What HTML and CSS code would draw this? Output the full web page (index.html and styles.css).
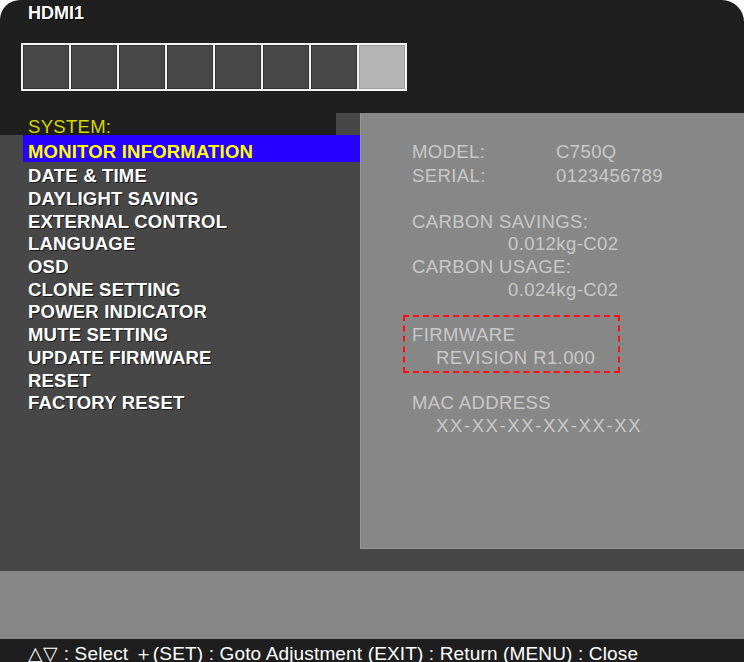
FILE: index.html
```html
<!DOCTYPE html>
<html>
<head>
<meta charset="utf-8">
<link rel="stylesheet" href="styles.css">
</head>
<body>
<div class="osd">
  <div class="title">HDMI1</div>
  <div class="cells">
    <div class="cell sel"></div>
    <div class="cell sel"></div>
    <div class="cell"></div>
    <div class="cell"></div>
    <div class="cell"></div>
    <div class="cell"></div>
    <div class="cell"></div>
    <div class="cell light"></div>
  </div>
  <div class="main">
    <div class="menu">
      <div class="menu-head">SYSTEM:</div>
      <div class="menu-list">
        <div class="item active">MONITOR INFORMATION</div>
        <div class="item">DATE &amp; TIME</div>
        <div class="item">DAYLIGHT SAVING</div>
        <div class="item">EXTERNAL CONTROL</div>
        <div class="item">LANGUAGE</div>
        <div class="item">OSD</div>
        <div class="item">CLONE SETTING</div>
        <div class="item">POWER INDICATOR</div>
        <div class="item">MUTE SETTING</div>
        <div class="item">UPDATE FIRMWARE</div>
        <div class="item">RESET</div>
        <div class="item">FACTORY RESET</div>
      </div>
    </div>
    <div class="info-col">
      <div class="info">
        <div class="pair first"><span>MODEL:</span><span>C750Q</span></div>
        <div class="pair"><span>SERIAL:</span><span>0123456789</span></div>
        <div class="blank"></div>
        <div class="line">CARBON SAVINGS:</div>
        <div class="line val">0.012kg-C02</div>
        <div class="line">CARBON USAGE:</div>
        <div class="line val">0.024kg-C02</div>
        <div class="blank"></div>
        <div class="fw-box">
          <div class="line">FIRMWARE</div>
          <div class="line sub">REVISION R1.000</div>
        </div>
        <div class="blank"></div>
        <div class="line">MAC ADDRESS</div>
        <div class="line sub wide">XX-XX-XX-XX-XX-XX</div>
      </div>
    </div>
  </div>
  <div class="band"></div>
  <div class="footer">△▽ : Select ＋(SET) : Goto Adjustment (EXIT) : Return (MENU) : Close</div>
</div>
</body>
</html>
```
FILE: styles.css
```css
html, body {
  margin: 0;
  padding: 0;
  background: #ffffff;
}
.osd {
  width: 744px;
  height: 662px;
  background: #1f1f1f;
  border-radius: 20px 22px 0 0;
  overflow: hidden;
  display: flex;
  flex-direction: column;
  font-family: "Liberation Sans", Arial, sans-serif;
  font-size: 18.5px;
}
.title {
  height: 27px;
  line-height: 27px;
  padding-left: 28px;
  color: #ffffff;
  font-weight: bold;
  font-size: 18px;
  text-shadow: 1px 1px 0 #000;
}
.cells {
  display: flex;
  margin: 16px 0 0 21px;
  height: 48px;
}
.cell {
  box-sizing: border-box;
  width: 50px;
  height: 48px;
  border: 2px solid #f4f4f4;
  background: #484848;
  box-shadow: inset 0 0 0 1px #333333;
}
.cell + .cell {
  margin-left: -2px;
}
.cell.light {
  background: #b4b4b4;
  box-shadow: inset 0 0 0 1px #a0a0a0;
}
.main {
  display: flex;
  margin-top: 22px;
  height: 458px;
}
.menu {
  width: 360px;
  display: flex;
  flex-direction: column;
}
.menu-head {
  height: 22px;
  line-height: 28px;
  padding-left: 28px;
  color: #d6d600;
  letter-spacing: 0.3px;
  background: linear-gradient(to right, transparent 336px, #474747 336px);
}
.menu-list {
  flex: 1;
  background: #474747;
}
.item {
  padding-left: 28px;
  line-height: 22.7px;
  color: #ffffff;
  font-weight: bold;
  letter-spacing: 0.2px;
  text-shadow: 1px 1px 0 #1a1a1a;
  white-space: nowrap;
}
.item.active {
  box-sizing: border-box;
  height: 27px;
  margin: 0 0 3.2px 23px;
  padding: 5.6px 0 0 5px;
  background: #2800ff;
  color: #ffff00;
  text-shadow: none;
}
.info-col {
  flex: 1;
  background: #474747;
  padding-bottom: 22px;
  display: flex;
}
.info {
  flex: 1;
  background: #878787;
  border-left: 1px solid #959595;
  border-bottom: 1px solid #959595;
  padding: 28.4px 0 0 51px;
  color: #c8c8c8;
  line-height: 22.7px;
  letter-spacing: 0.4px;
}
.pair {
  display: grid;
  grid-template-columns: 144px auto;
}
.pair.first {
  margin-bottom: 1.3px;
}
.blank {
  height: 22.7px;
}
.val {
  padding-left: 96px;
}
.sub {
  padding-left: 24px;
}
.wide {
  letter-spacing: 1.6px;
}
.fw-box {
  width: 206px;
  margin: -9.35px 0 -3.65px -9px;
  padding: 7.35px 0 1.65px 7px;
  border: 2px dashed #ff1010;
}
.band {
  height: 68px;
  background: #878787;
}
.footer {
  flex: 1;
  background: #1e1e1e;
  color: #ffffff;
  padding: 3px 0 0 28px;
  line-height: 23px;
  font-size: 19px;
  letter-spacing: 0.15px;
  overflow: hidden;
  white-space: nowrap;
}
```
